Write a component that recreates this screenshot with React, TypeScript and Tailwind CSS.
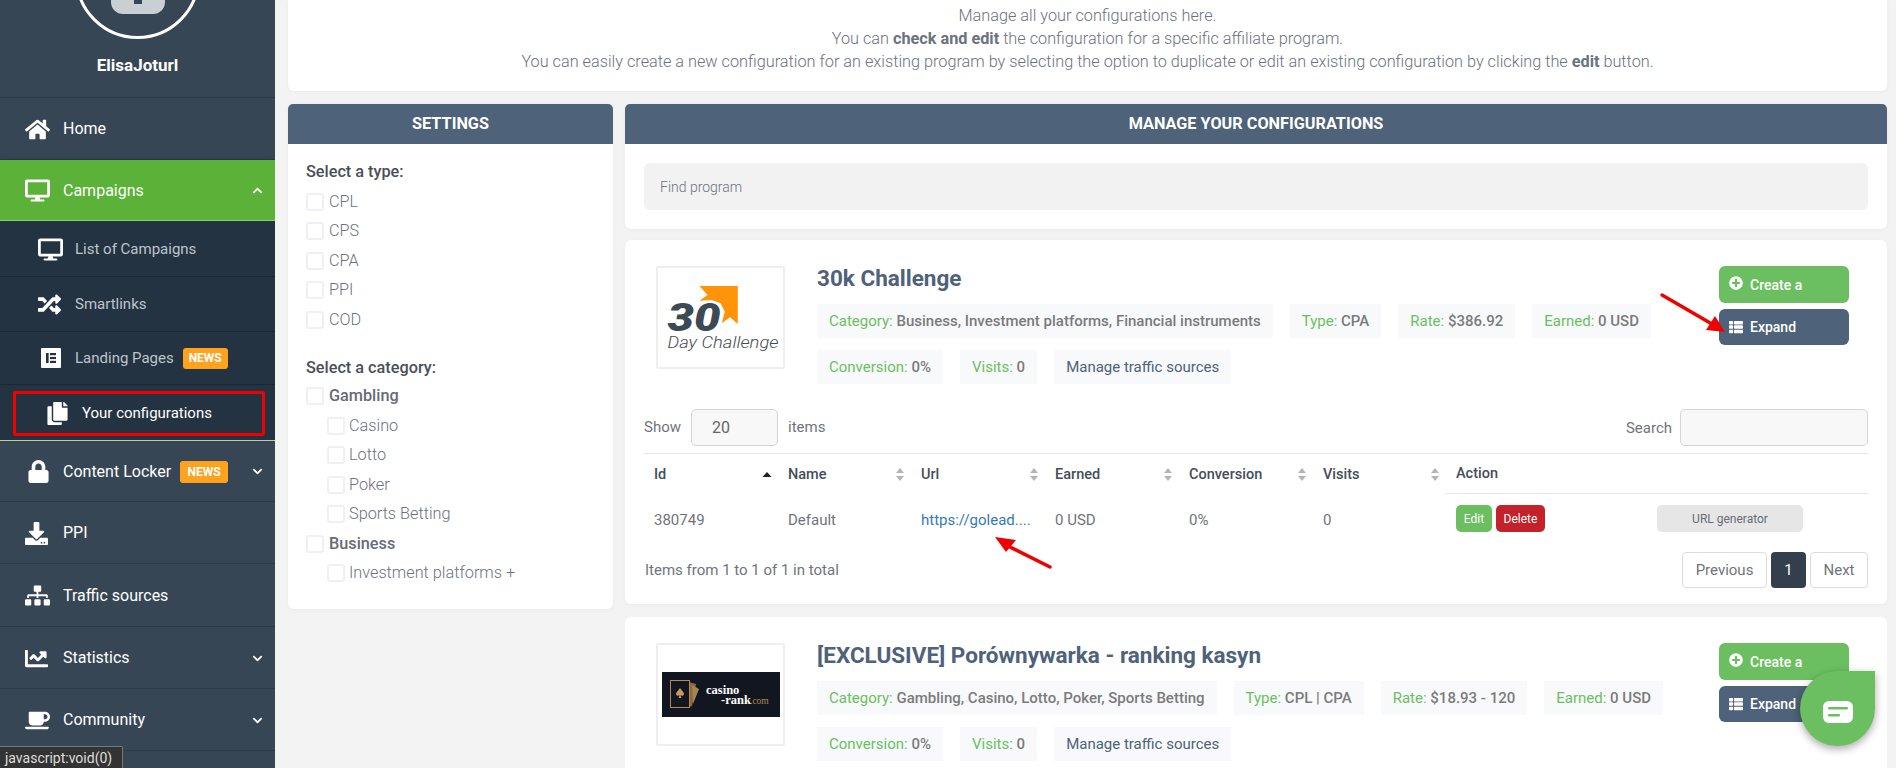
import type { ReactNode } from "react";
import {
  FaChartLine,
  FaChevronDown,
  FaChevronUp,
  FaCoffee,
  FaCopy,
  FaDesktop,
  FaDownload,
  FaHome,
  FaLock,
  FaPlusCircle,
  FaRandom,
  FaSitemap,
  FaThList,
} from "react-icons/fa";

function NewsBadge({ className }: { className: string }) {
  return (
    <span className={`flex items-center justify-center rounded-[3px] bg-[#ffa31f] text-xs font-bold text-white ${className}`}>
      NEWS
    </span>
  );
}

function NavRow({
  icon,
  label,
  chevron,
  badge,
  h,
}: {
  icon: ReactNode;
  label: string;
  chevron?: boolean;
  badge?: boolean;
  h: string;
}) {
  return (
    <div className={`flex items-center border-b border-[#2b3c4d] pl-[25px] pr-3 pt-px text-base text-white ${h}`}>
      <span className="flex w-[38px] shrink-0 text-[25px]">{icon}</span>
      <span>{label}</span>
      {badge && <NewsBadge className="ml-[9px] h-[22px] w-[48px]" />}
      {chevron && <FaChevronDown className="ml-auto text-[11px]" />}
    </div>
  );
}

function SubRow({ icon, label, badge, h }: { icon: ReactNode; label: string; badge?: boolean; h: string }) {
  return (
    <div className={`flex items-center border-b border-[#1c2730] pl-[38px] text-[15px] text-[#bcc5cc] ${h}`}>
      <span className="flex w-[37px] shrink-0 text-[25px] text-white">{icon}</span>
      <span>{label}</span>
      {badge && <NewsBadge className="ml-[9px] h-[21px] w-[45px]" />}
    </div>
  );
}

function Sidebar() {
  return (
    <aside className="flex h-full w-[275px] shrink-0 flex-col overflow-hidden bg-[#364655]">
      <div className="flex h-[98px] shrink-0 flex-col items-center border-b border-[#2b3c4d]">
        <div className="mt-[-86px] flex h-[125px] w-[125px] shrink-0 items-end justify-center rounded-full border-[3px] border-white pb-[22px]">
          <div className="h-[50px] w-[54px] rounded-b-[12px] bg-[#c9d0d4]">
            <div className="mx-auto mt-[36px] h-[4px] w-[8px] bg-[#364655]" />
          </div>
        </div>
        <div className="mt-[14px] text-[17px] font-bold text-white">ElisaJoturl</div>
      </div>
      <NavRow h="h-[62px]" icon={<FaHome />} label="Home" />
      <div className="flex h-[61px] shrink-0 items-center border-b border-[#8fd06f] bg-[#5cb138] pl-[25px] pr-3 pt-px text-base text-white shadow-[0_1px_5px_rgba(0,0,0,0.25)]">
        <span className="flex w-[38px] text-[25px]">
          <FaDesktop />
        </span>
        <span>Campaigns</span>
        <FaChevronUp className="ml-auto text-[11px]" />
      </div>
      <div className="flex h-[220px] shrink-0 flex-col border-b border-[#b9cf9e] bg-[#243342]">
        <SubRow h="h-[56px] pt-px" icon={<FaDesktop />} label="List of Campaigns" />
        <SubRow h="h-[55px]" icon={<FaRandom className="text-[23px]" />} label="Smartlinks" />
        <SubRow
          h="h-[53px]"
          icon={
            <svg width="20" height="20" viewBox="0 0 20 20" className="ml-[3px]">
              <rect width="20" height="20" rx="1" fill="#fff" />
              <rect x="5" y="5" width="2.6" height="10" fill="#243342" />
              <rect x="9" y="5" width="6" height="2.2" fill="#243342" />
              <rect x="9" y="8.9" width="6" height="2.2" fill="#243342" />
              <rect x="9" y="12.8" width="6" height="2.2" fill="#243342" />
            </svg>
          }
          label="Landing Pages"
          badge
        />
        <div className="flex flex-1 items-center pl-[46px] pt-px text-[15px] text-white">
          <FaCopy className="mr-[13px] text-[23px]" />
          <span>Your configurations</span>
        </div>
      </div>
      <NavRow h="h-[61px]" icon={<FaLock className="ml-[2px] text-[23px]" />} label="Content Locker" chevron badge />
      <NavRow h="h-[62px]" icon={<FaDownload className="text-[23px]" />} label="PPI" />
      <NavRow h="h-[63px]" icon={<FaSitemap />} label="Traffic sources" />
      <NavRow h="h-[62px]" icon={<FaChartLine className="text-[23px]" />} label="Statistics" chevron />
      <NavRow h="h-[62px]" icon={<FaCoffee />} label="Community" chevron />
    </aside>
  );
}

function Check({ label, bold, nested }: { label: string; bold?: boolean; nested?: boolean }) {
  return (
    <div className={`flex h-[29.5px] items-center ${nested ? "pl-[21px]" : ""}`}>
      <span className={`h-[18px] w-[18px] shrink-0 rounded-[3px] border-2 border-[#eef0f5] bg-white ${nested ? "mr-1" : "mr-[5px]"}`} />
      <span className={bold ? "font-medium text-[#666b75]" : "font-light text-[#6b7280]"}>{label}</span>
    </div>
  );
}

function PanelHeader({ children }: { children: ReactNode }) {
  return (
    <div className="flex h-10 items-center justify-center rounded-t-[5px] bg-[#4e6279] text-[16.25px] font-bold uppercase text-white">
      {children}
    </div>
  );
}

function Settings() {
  return (
    <div className="h-[505px] w-[325px] shrink-0 rounded-[6px] bg-white shadow-[0_1px_4px_rgba(0,0,0,0.04)]">
      <PanelHeader>Settings</PanelHeader>
      <div className="px-[18px] text-[16.25px]">
        <div className="mt-[18px] mb-[5px] font-medium leading-5 text-[#4a4f58]">Select a type:</div>
        <Check label="CPL" />
        <Check label="CPS" />
        <Check label="CPA" />
        <Check label="PPI" />
        <Check label="COD" />
        <div className="mt-[23px] mb-[4px] font-medium leading-5 text-[#4a4f58]">Select a category:</div>
        <Check label="Gambling" bold />
        <Check label="Casino" nested />
        <Check label="Lotto" nested />
        <Check label="Poker" nested />
        <Check label="Sports Betting" nested />
        <Check label="Business" bold />
        <Check label="Investment platforms +" nested />
      </div>
    </div>
  );
}

function Tag({ label, value }: { label?: string; value: string }) {
  return (
    <span className={`flex h-[34px] items-center whitespace-pre bg-[#f8f9fb] px-3 text-[15px] ${label ? "font-medium text-[#7b7b7b]" : "text-[#4e6279]"}`}>
      {label && <span className="font-normal text-[#6cbf60]">{label} </span>}
      {value}
    </span>
  );
}

function ThirtyDayLogo() {
  return (
    <svg width="125" height="99" viewBox="0 0 125 99">
      <polygon points="41.4,18 79.8,18 79.8,56 72,49.3 63.8,55.3 66.7,43.7 62.6,35.3 53.6,32 41.4,32.7 49.6,27" fill="#ff9408" />
      <text
        x="9.5"
        y="63"
        fontFamily="Roboto, sans-serif"
        fontStyle="italic"
        fontWeight="900"
        fontSize="39"
        fill="#3c4a54"
        textLength="53"
        lengthAdjust="spacingAndGlyphs"
      >
        30
      </text>
      <text
        x="9.5"
        y="80"
        fontFamily="Roboto, sans-serif"
        fontStyle="italic"
        fontWeight="300"
        fontSize="17"
        fill="#444c52"
        textLength="111"
        lengthAdjust="spacingAndGlyphs"
      >
        Day Challenge
      </text>
    </svg>
  );
}

function CasinoLogo() {
  return (
    <svg width="118" height="45" viewBox="0 0 118 45">
      <rect width="118" height="45" fill="#121621" />
      <path d="M27 10l7 2-4 22-3 1z" fill="#8a6a3e" />
      <path d="M30 13l7 4-6 15z" fill="#a58453" />
      <rect x="8.5" y="8.5" width="19" height="27" fill="#121621" stroke="#b08a52" />
      <path d="M18 16c2 3 4 4 4 6a2 2 0 0 1-3.5 1l.8 3h-2.6l.8-3a2 2 0 0 1-3.5-1c0-2 2-3 4-6z" fill="#c89a58" />
      <text x="44" y="22" fontFamily="Liberation Serif, serif" fontWeight="700" fontSize="12.5" fill="#fff">
        casino
      </text>
      <text x="59" y="32" fontFamily="Liberation Serif, serif" fontWeight="700" fontSize="12.5" fill="#fff">
        -rank
      </text>
      <text x="88" y="32" fontFamily="Liberation Serif, serif" fontSize="9.5" fill="#b08a52">
        .com
      </text>
    </svg>
  );
}

function ProgramTop({
  logo,
  title,
  tags,
}: {
  logo: ReactNode;
  title: string;
  tags: { label?: string; value: string }[];
}) {
  return (
    <div className="flex pl-[31px] pt-[26px]">
      <div className="flex h-[103px] w-[129px] shrink-0 items-center justify-center rounded-[2px] border-2 border-[#eeeeee]">
        {logo}
      </div>
      <div className="ml-[32px] w-[880px]">
        <div className="flex h-[25px] items-center text-[22.5px] font-bold text-[#4e6279]">{title}</div>
        <div className="mt-[13px] flex flex-wrap gap-x-[17px] gap-y-3">
          {tags.map((t) => (
            <Tag key={t.label ?? t.value} label={t.label} value={t.value} />
          ))}
        </div>
      </div>
      <div className="ml-auto mr-[38px] flex w-[130px] shrink-0 flex-col gap-[6px] text-sm font-medium text-white">
        <div className="flex h-[37px] items-center rounded-[6px] bg-[#6cbf60] pl-[10px]">
          <FaPlusCircle className="mr-[7px] mt-[-4px] text-sm" />
          Create a
        </div>
        <div className="flex h-[36px] items-center rounded-[6px] bg-[#4e6279] pl-[10px]">
          <FaThList className="mr-[7px] text-sm" />
          Expand
        </div>
      </div>
    </div>
  );
}

function SortIcon({ active }: { active?: boolean }) {
  return (
    <svg width="10" height="16" viewBox="0 0 10 16" className="mr-[6px]">
      {active ? (
        <polygon points="5,5 9.5,10 0.5,10" fill="#222" />
      ) : (
        <>
          <polygon points="5,1 9,6 1,6" fill="#b5b5b5" />
          <polygon points="1,9 9,9 5,14" fill="#b5b5b5" />
        </>
      )}
    </svg>
  );
}

const columns = ["Id", "Name", "Url", "Earned", "Conversion", "Visits"];

function ConfigTable() {
  return (
    <div className="mt-[25px] px-[19px] text-[15px] text-[#6f747c]">
      <div className="flex h-[37px] items-center">
        <span className="w-[47px]">Show</span>
        <span className="flex h-[37px] w-[87px] items-center rounded-[5px] border border-[#d5d5d5] bg-[#f8f8f8] pl-[20px] text-base text-[#666]">
          20
        </span>
        <span className="ml-[10px]">items</span>
        <span className="ml-auto mr-[8px] pt-px">Search</span>
        <span className="h-[37px] w-[188px] rounded-[5px] border border-[#d5d5d5] bg-[#f8f8f8]" />
      </div>
      <div className="mt-[7px] grid grid-cols-[134px_133px_134px_134px_134px_133px_1fr] border-t border-[#e5e5e5]">
        {columns.map((c, i) => (
          <div key={c} className="flex h-10 items-center justify-between pl-[10px] pt-px text-[14.5px] font-medium text-[#444e5a]">
            {c}
            <SortIcon active={i === 0} />
          </div>
        ))}
        <div className="flex h-10 items-center border-b border-[#e5e5e5] pl-[10px] pt-px text-[14.5px] font-medium text-[#444e5a]">Action</div>
        <div className="flex h-[54px] items-center pb-[2px] pl-[10px]">380749</div>
        <div className="flex h-[54px] items-center pb-[2px] pl-[10px]">Default</div>
        <div className="flex h-[54px] items-center pb-[2px] pl-[10px] text-[#337ab7]">https://golead....</div>
        <div className="flex h-[54px] items-center pb-[2px] pl-[10px]">0 USD</div>
        <div className="flex h-[54px] items-center pb-[2px] pl-[10px]">0%</div>
        <div className="flex h-[54px] items-center pb-[2px] pl-[10px]">0</div>
        <div className="flex h-[54px] items-start pl-[10px] pt-[11px] text-xs text-white">
          <span className="flex h-[27px] w-[36px] items-center justify-center rounded-[5px] bg-[#6cbf60]">Edit</span>
          <span className="ml-1 flex h-[27px] w-[49px] items-center justify-center rounded-[5px] bg-[#c3222a]">Delete</span>
          <span className="ml-[112px] flex h-[27px] w-[146px] items-center justify-center rounded-[5px] bg-[#e6e6e6] text-[#666c75]">
            URL generator
          </span>
        </div>
      </div>
      <div className="mt-[4px] flex items-center pl-px">
        <span>Items from 1 to 1 of 1 in total</span>
        <div className="ml-auto flex gap-1">
          <span className="flex h-[36px] w-[85px] items-center justify-center rounded-[4px] border border-[#ddd] bg-white">Previous</span>
          <span className="flex h-[36px] w-[35px] items-center justify-center rounded-[4px] bg-[#333f4d] text-white">1</span>
          <span className="flex h-[36px] w-[58px] items-center justify-center rounded-[4px] border border-[#ddd] bg-white">Next</span>
        </div>
      </div>
    </div>
  );
}

export default function App() {
  return (
    <div className="relative flex h-[768px] w-[1896px] overflow-hidden bg-[#f3f3f3] font-['Roboto',sans-serif]">
      <Sidebar />
      <main className="ml-[13px] w-[1599px] shrink-0">
        <div className="flex h-[91px] flex-col items-center rounded-b-[6px] bg-white pt-[4px] text-[16.25px] font-light leading-[23px] text-[#6b7280] shadow-[0_1px_4px_rgba(0,0,0,0.04)]">
          <p>Manage all your configurations here.</p>
          <p>
            You can <b className="font-bold">check and edit</b> the configuration for a specific affiliate program.
          </p>
          <p>
            You can easily create a new configuration for an existing program by selecting the option to duplicate or edit an existing
            configuration by clicking the <b className="font-bold">edit</b> button.
          </p>
        </div>
        <div className="mt-[13px] flex items-start gap-3">
          <Settings />
          <div className="flex min-w-0 flex-1 flex-col gap-[11px]">
            <div className="h-[125px] rounded-[6px] bg-white shadow-[0_1px_4px_rgba(0,0,0,0.04)]">
              <PanelHeader>Manage your configurations</PanelHeader>
              <div className="mx-[19px] mt-[19px] flex h-[47px] items-center rounded-[6px] bg-[#f2f2f2] pl-[16px] text-sm font-light text-[#6b7280]">
                Find program
              </div>
            </div>
            <div className="h-[364px] rounded-[6px] bg-white shadow-[0_1px_4px_rgba(0,0,0,0.04)]">
              <ProgramTop
                logo={<ThirtyDayLogo />}
                title="30k Challenge"
                tags={[
                  { label: "Category:", value: "Business, Investment platforms, Financial instruments" },
                  { label: "Type:", value: "CPA" },
                  { label: "Rate:", value: "$386.92" },
                  { label: "Earned:", value: "0 USD" },
                  { label: "Conversion:", value: "0%" },
                  { label: "Visits:", value: "0" },
                  { value: "Manage traffic sources" },
                ]}
              />
              <ConfigTable />
            </div>
            <div className="mt-[2px] h-[160px] rounded-t-[6px] bg-white">
              <ProgramTop
                logo={<CasinoLogo />}
                title="[EXCLUSIVE] Porównywarka - ranking kasyn"
                tags={[
                  { label: "Category:", value: "Gambling, Casino, Lotto, Poker, Sports Betting" },
                  { label: "Type:", value: "CPL | CPA" },
                  { label: "Rate:", value: "$18.93 - 120" },
                  { label: "Earned:", value: "0 USD" },
                  { label: "Conversion:", value: "0%" },
                  { label: "Visits:", value: "0" },
                  { value: "Manage traffic sources" },
                ]}
              />
            </div>
          </div>
        </div>
      </main>

      {/* red annotations */}
      <div className="absolute left-[13px] top-[391px] h-[45px] w-[252px] rounded-[2px] border-[3px] border-[#f00000]" />
      <svg className="absolute left-0 top-0" width="1896" height="768" viewBox="0 0 1896 768" fill="none">
        <line x1="1662" y1="295" x2="1712" y2="324" stroke="#f00000" strokeWidth="3.5" strokeLinecap="round" />
        <polygon points="1725,332 1706,330 1715,316" fill="#f00000" />
        <line x1="1050" y1="567" x2="1008" y2="546" stroke="#f00000" strokeWidth="3.5" strokeLinecap="round" />
        <polygon points="995,537 1016,540 1006,552" fill="#f00000" />
      </svg>

      {/* chat bubble */}
      <div className="absolute left-[1800px] top-[671px] flex h-[75px] w-[75px] items-center justify-center rounded-full rounded-tr-[8px] bg-[#6cbf60] shadow-[0_3px_8px_rgba(0,0,0,0.35)]">
        <svg width="30" height="22" viewBox="0 0 30 22" className="mt-[6px]">
          <rect width="30" height="22" rx="6" fill="#fff" />
          <rect x="5" y="6" width="20" height="2.6" rx="1.3" fill="#6cbf60" />
          <rect x="5" y="13" width="12" height="2.6" rx="1.3" fill="#6cbf60" />
        </svg>
      </div>

      {/* status tooltip */}
      <div className="absolute bottom-0 left-0 flex h-[22px] w-[123px] items-center rounded-tr-[2px] border-t border-r border-[#777] bg-[#333] pl-[5px] text-sm text-[#ddd]">
        javascript:void(0)
      </div>
    </div>
  );
}
